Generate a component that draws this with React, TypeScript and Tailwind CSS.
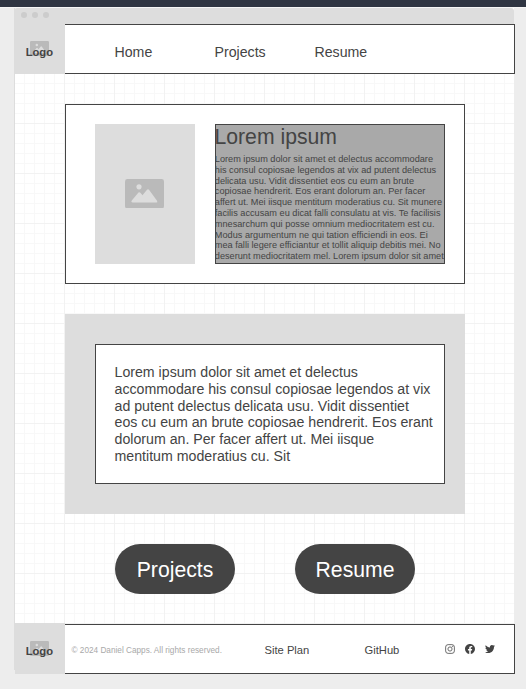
import React from "react";

function PictureIcon({ className }: { className: string }) {
  return (
    <svg className={className} viewBox="0 0 39 30" preserveAspectRatio="none">
      <rect width="39" height="30" rx="2.5" fill="#bababa" />
      <circle cx="14" cy="8" r="2.6" fill="#ddd" />
      <path d="M6.5 23.5 Q6 22.5 7 21.5 L13.5 13.8 Q14.5 13 15.4 14 L17.5 16.5 L22 11 Q23 10 24 11 L32 22 Q33 24 31.5 24 H7.5 Z" fill="#ddd" />
    </svg>
  );
}

function Logo({ className, iconClass }: { className: string; iconClass: string }) {
  return (
    <div className={`relative flex shrink-0 justify-end bg-[#ddd] pr-[12px] text-[11.2px] leading-[13px] font-bold ${className}`}>
      <PictureIcon className={`absolute right-4 h-[15px] w-[19px] ${iconClass}`} />
      <span className="relative mt-[22px]">Logo</span>
    </div>
  );
}

function Social() {
  return (
    <div className="mt-[18.5px] ml-[45px] flex gap-2.5 text-[#444]">
      <svg className="size-2.5 opacity-85" viewBox="0 0 24 24" fill="none" stroke="currentColor" strokeWidth="2.2">
        <rect x="1.5" y="1.5" width="21" height="21" rx="6" />
        <circle cx="12" cy="12" r="5" />
        <circle cx="18.2" cy="5.8" r="0.6" fill="currentColor" />
      </svg>
      <svg className="size-2.5" viewBox="0 0 24 24" fill="currentColor">
        <path d="M24 12.07C24 5.4 18.63 0 12 0S0 5.4 0 12.07C0 18.1 4.39 23.1 10.13 24v-8.44H7.08v-3.49h3.05V9.41c0-3.02 1.79-4.69 4.53-4.69 1.31 0 2.68.24 2.68.24v2.97h-1.51c-1.49 0-1.96.93-1.96 1.89v2.25h3.33l-.53 3.49h-2.8V24C19.61 23.1 24 18.1 24 12.07z" />
      </svg>
      <svg className="size-2.5" viewBox="0 0 24 24" fill="currentColor">
        <path d="M23.95 4.57a10 10 0 0 1-2.82.77 4.96 4.96 0 0 0 2.16-2.72c-.95.55-2 .95-3.13 1.18a4.92 4.92 0 0 0-8.38 4.48C7.69 8.09 4.07 6.13 1.64 3.16a4.82 4.82 0 0 0-.67 2.48c0 1.71.87 3.21 2.19 4.1a4.9 4.9 0 0 1-2.23-.62v.06a4.92 4.92 0 0 0 3.95 4.83 5 5 0 0 1-2.21.08 4.94 4.94 0 0 0 4.6 3.42A9.87 9.87 0 0 1 0 19.54a13.99 13.99 0 0 0 7.55 2.21c9.05 0 14-7.5 14-13.98 0-.21 0-.42-.02-.63a9.94 9.94 0 0 0 2.46-2.55z" />
      </svg>
    </div>
  );
}

const intro = [
  "Lorem ipsum dolor sit amet et delectus accommodare",
  "his consul copiosae legendos at vix ad putent delectus",
  "delicata usu. Vidit dissentiet eos cu eum an brute",
  "copiosae hendrerit. Eos erant dolorum an. Per facer",
  "affert ut. Mei iisque mentitum moderatius cu. Sit munere",
  "facilis accusam eu dicat falli consulatu at vis. Te facilisis",
  "mnesarchum qui posse omnium mediocritatem est cu.",
  "Modus argumentum ne qui tation efficiendi in eos. Ei",
  "mea falli legere efficiantur et tollit aliquip debitis mei. No",
  "deserunt mediocritatem mel. Lorem ipsum dolor sit amet",
];
const about = [
  "Lorem ipsum dolor sit amet et delectus",
  "accommodare his consul copiosae legendos at vix",
  "ad putent delectus delicata usu. Vidit dissentiet",
  "eos cu eum an brute copiosae hendrerit. Eos erant",
  "dolorum an. Per facer affert ut. Mei iisque",
  "mentitum moderatius cu. Sit",
];

export default function App() {
  return (
    <div className="h-[689px] w-[526px] overflow-hidden bg-[#ededed] font-['Liberation_Sans',Arial,sans-serif] text-[#444]">
      <div className="h-[7px] bg-[#2f3542]" />
      <div className="h-px bg-[#f6f6f6]" />
      <div className="ml-[14px] flex h-[662px] w-[500px] flex-col bg-white bg-[linear-gradient(to_right,#ddd_1px,transparent_1px),linear-gradient(to_right,#f2f2f2_1px,transparent_1px),linear-gradient(#f2f2f2_1px,transparent_1px),linear-gradient(to_right,#f8f8f8_1px,transparent_1px),linear-gradient(#f8f8f8_1px,transparent_1px)] bg-[size:500px_662px,50px_50px,50px_50px,10px_10px,10px_10px] bg-[position:0_0,0_0,0_15px,0_0,0_5px]">
        <div className="flex h-4 w-[500px] shrink-0 items-center gap-[5px] rounded-t-[3px] bg-[#ddd] pb-[2px] pl-[7px]">
          <span className="size-1.5 rounded-full bg-[#ccc]" />
          <span className="size-1.5 rounded-full bg-[#ccc]" />
          <span className="size-1.5 rounded-full bg-[#ccc]" />
        </div>
        <header className="flex h-[50px] w-[501px] shrink-0">
          <Logo className="h-[50px] w-[51px]" iconClass="top-[17px]" />
          <nav className="flex flex-1 border-y border-r border-[#444] bg-white pt-[19px] text-[14.17px] leading-[17px]">
            <a className="ml-[49.5px] w-[100px]">Home</a>
            <a className="w-[100px]">Projects</a>
            <a>Resume</a>
          </nav>
        </header>
        <main className="ml-[51px] w-[400px]">
          <section className="mt-[30px] flex h-[180px] gap-5 border border-[#444] bg-white px-[29px] pt-[19px] pr-[19px]">
            <div className="flex h-[140px] w-[100px] justify-center bg-[#ddd] pt-[54.5px] pr-[1px]">
              <PictureIcon className="h-[29.5px] w-[39px]" />
            </div>
            <div className="h-[140px] w-[230px] overflow-hidden border border-[#444] bg-[#a9a9a9] whitespace-nowrap">
              <h1 className="-ml-[1.5px] text-[21.2px] leading-[23px]">Lorem ipsum</h1>
              <p className="-ml-[1.2px] mt-[6px] text-[9.19px] leading-[10.8px]">
                {intro.map((line) => <span key={line} className="block">{line}</span>)}
              </p>
            </div>
          </section>
          <section className="mt-[30px] h-[200px] bg-[#ddd] p-[30px] pr-5">
            <p className="h-[140px] border border-[#444] bg-white pt-[19px] pl-[18.5px] text-[14.18px] leading-[16.8px] whitespace-nowrap">
              {about.map((line) => <span key={line} className="block">{line}</span>)}
            </p>
          </section>
          <div className="mt-[30px] flex gap-[60px] pl-[50px] text-[21.2px] text-white">
            <button className="h-[50px] w-[120px] rounded-full bg-[#444] pt-[2px]">Projects</button>
            <button className="h-[50px] w-[120px] rounded-full bg-[#444] pt-[2px]">Resume</button>
          </div>
        </main>
        <footer className="mt-[30px] flex h-[50px] w-[501px] shrink-0">
          <Logo className="-mt-px ml-px h-[51px] w-[50px]" iconClass="top-[18px]" />
          <div className="flex flex-1 border-y border-r border-[#444] bg-white text-[11.2px] leading-[13px] whitespace-nowrap">
            <small className="mt-[19px] ml-[6.5px] w-[193px] text-[8.22px] text-[#a9a9a9]">© 2024 Daniel Capps. All rights reserved.</small>
            <a className="mt-[19px] w-[100px]">Site Plan</a>
            <a className="mt-[19px] w-[35px]">GitHub</a>
            <Social />
          </div>
        </footer>
      </div>
    </div>
  );
}
